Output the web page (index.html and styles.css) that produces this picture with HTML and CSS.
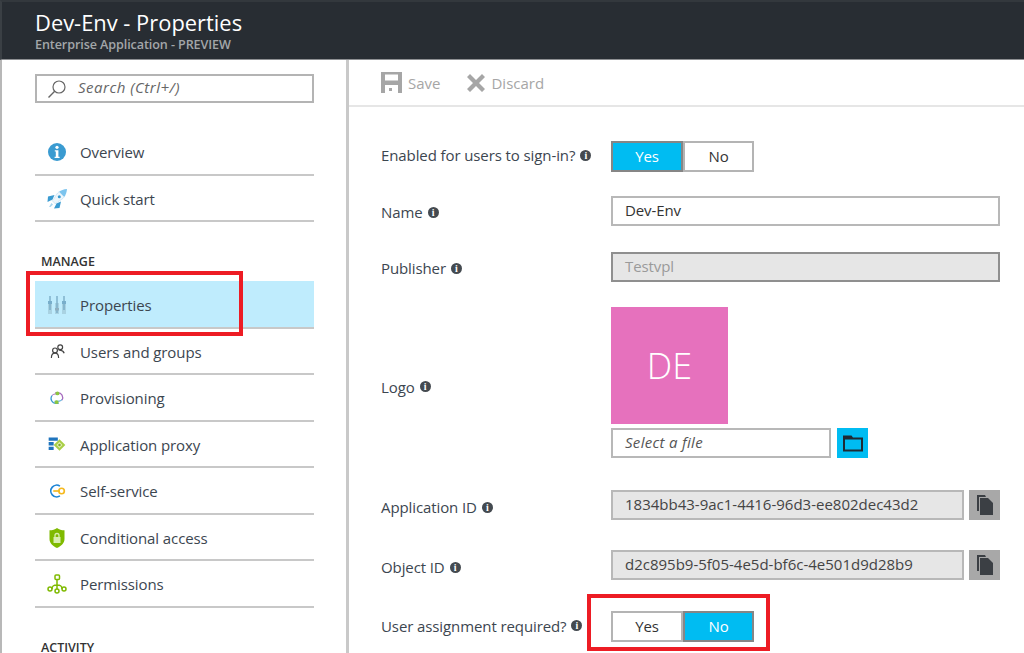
FILE: index.html
```html
<!DOCTYPE html>
<html lang="en">
<head>
<meta charset="utf-8">
<title>Dev-Env - Properties</title>
<link rel="stylesheet" href="styles.css">
</head>
<body>
<header class="blade-header">
  <h1 class="blade-title">Dev-Env - Properties</h1>
  <p class="blade-subtitle">Enterprise Application - PREVIEW</p>
</header>
<div class="blade-body">
  <aside class="sidebar">
    <div class="search">
      <svg class="search-icon" viewBox="0 0 20 20" width="20" height="20"><circle cx="12" cy="8" r="6" fill="none" stroke="#666" stroke-width="1.2"/><path d="M7.7 12.3 1.5 18.5" stroke="#666" stroke-width="1.4" fill="none"/></svg>
      <span class="search-text">Search (Ctrl+/)</span>
    </div>
    <nav class="nav nav-first">
      <a class="nav-item"><span class="nav-icon"><svg viewBox="0 0 20 20" width="20" height="20"><circle cx="10" cy="10" r="9" fill="#3a9bd1"/><circle cx="10" cy="5.3" r="1.6" fill="#fff"/><path d="M7.800 8.200h3.600v6.600h1.200v1.300H7.600v-1.300h1.200V9.500h-1z" fill="#fff"/></svg></span>Overview</a>
      <a class="nav-item"><span class="nav-icon"><svg viewBox="0 0 20 20" width="20" height="20"><path d="M20 0c-3.500.3-6 1.300-8 2.800l5.200 5.200C18.700 6 19.700 3.500 20 0z" fill="#7cc4ee"/><path d="M12 2.800C10 4.300 8.700 6.500 7.500 9L5 11.500 8.500 15l2.500-2.500c2.500-1.200 4.700-2.500 6.200-4.500z" fill="#eef6fb" stroke="#a9d5ee" stroke-width=".5"/><path d="M7.500 6 1 7.500.5 13l5-2.500zM14 12.500 12.500 19l-5.500.5 2.500-5z" fill="#3a9bd1"/><circle cx="12.300" cy="7.700" r="1.500" fill="#3a9bd1"/><path d="M4.500 14l1.500 1.500L3.500 18H2z" fill="#a9d5ee"/></svg></span>Quick start</a>
    </nav>
    <h2 class="nav-heading">MANAGE</h2>
    <nav class="nav">
      <a class="nav-item nav-item-active"><span class="nav-icon"><svg viewBox="0 0 20 20" width="20" height="20"><path d="M1 6h4v13H1zM8 8h4v11H8zM15 6h4v13h-4z" fill="#a9d2e2"/><path d="M3 1v14M10 1v17M17 1v14" stroke="#75a8c4" stroke-width="1.300" fill="none"/><path d="M1 6h4v3H1zM15 6h4v3h-4z" fill="#78aecb"/><path d="M8 13h4v2.500H8z" fill="#8fafc0"/></svg></span>Properties</a>
      <a class="nav-item"><span class="nav-icon"><svg viewBox="-3 -2 25 25" width="20" height="20"><g fill="none" stroke="#444" stroke-width="1.500"><circle cx="13.500" cy="4.500" r="3"/><circle cx="7" cy="8.500" r="3"/><path d="M2.500 18c0-4 1.500-6 4.500-6s4.500 2 4.500 6M11.500 8c2.500.5 5.500 0 7 4"/></g></svg></span>Users and groups</a>
      <a class="nav-item"><span class="nav-icon"><svg viewBox="-2 -2 24 24" width="20" height="20"><path d="M8 3.500h3a6 6 0 0 1 5 9" fill="none" stroke="#a569bd" stroke-width="1.500"/><path d="M12 16.500H9a6 6 0 0 1-5-9.500" fill="none" stroke="#3a9bd1" stroke-width="1.500"/><path d="M4 7c2-2 4-2 9-2" fill="none" stroke="#a569bd" stroke-width="1.200"/><path d="M16 12c-2 2-4 2-9 2" fill="none" stroke="#3a9bd1" stroke-width="1.200"/><circle cx="10.500" cy="4.500" r="2.300" fill="#8dc63f"/><circle cx="9.500" cy="15" r="2.300" fill="#8dc63f"/></svg></span>Provisioning</a>
      <a class="nav-item"><span class="nav-icon"><svg viewBox="-2 -2 24 24" width="20" height="20"><path d="M0 1h11v4H0zM0 6.500h6v4H0zM0 12h6v4H0z" fill="#1f74bd"/><path d="M13 3l7 7-7 7-7-7z" fill="#a9cf46"/><path d="M13 6.500l3.500 3.500-3.500 3.500L9.500 10z" fill="#e3f0b5"/><circle cx="13" cy="10" r="1.500" fill="#7fa82e"/></svg></span>Application proxy</a>
      <a class="nav-item"><span class="nav-icon"><svg viewBox="-2 -2 24 24" width="20" height="20"><path d="M13.500 4.200A7 7 0 1 0 13.500 15.800" fill="none" stroke="#1f86d6" stroke-width="2"/><path d="M5.500 10h8" stroke="#f5b91f" stroke-width="2" fill="none"/><circle cx="15.500" cy="10" r="3.300" fill="none" stroke="#f5b91f" stroke-width="2"/></svg></span>Self-service</a>
      <a class="nav-item"><span class="nav-icon"><svg viewBox="0 0 20 20" width="20" height="20"><path d="M10 0c2 1.500 4.500 2.300 7.500 2.300V11c0 4-3 7-7.500 9-4.500-2-7.500-5-7.500-9V2.300C5.500 2.300 8 1.500 10 0z" fill="#7fba00"/><path d="M6.500 9h7v6h-7z" fill="#d9eeb0"/><path d="M8 9V7.500a2 2 0 0 1 4 0V9" fill="none" stroke="#d9eeb0" stroke-width="1.300"/></svg></span>Conditional access</a>
      <a class="nav-item"><span class="nav-icon"><svg viewBox="0 0 20 20" width="20" height="20"><g fill="none" stroke="#7fba00" stroke-width="1.500"><rect x="8" y="1" width="4.500" height="4.500" rx="1"/><circle cx="3" cy="15" r="2"/><circle cx="10" cy="17" r="2"/><circle cx="17" cy="15" r="2"/><path d="M10 5.500V15M5 15c0-3 1-4 5-4s5 1 5 4"/></g></svg></span>Permissions</a>
    </nav>
    <h2 class="nav-heading nav-heading-activity">ACTIVITY</h2>
    <div class="callout callout-nav"></div>
  </aside>
  <main class="content">
    <div class="toolbar">
      <button class="tool" type="button"><svg viewBox="0 0 21 21" width="21" height="21"><path d="M0 0h21v21H0zM4 2.500v6h13v-6zM4 13v8h13v-8z" fill="#a6a6a6" fill-rule="evenodd"/><path d="M8 16h3v3H8z" fill="#a6a6a6"/></svg>Save</button>
      <button class="tool" type="button"><svg viewBox="0 0 18 18" width="18" height="18"><path d="M3 0l6 6 6-6 3 3-6 6 6 6-3 3-6-6-6 6-3-3 6-6-6-6z" fill="#a6a6a6"/></svg>Discard</button>
    </div>
    <form class="form">
      <div class="row row-enabled">
        <label class="label">Enabled for users to sign-in?<i class="info">i</i></label>
        <div class="toggle"><span class="toggle-opt toggle-on">Yes</span><span class="toggle-opt">No</span></div>
      </div>
      <div class="row row-text">
        <label class="label">Name<i class="info">i</i></label>
        <div class="field">Dev-Env</div>
      </div>
      <div class="row row-text">
        <label class="label">Publisher<i class="info">i</i></label>
        <div class="field field-disabled field-muted">Testvpl</div>
      </div>
      <div class="row row-logo">
        <label class="label">Logo<i class="info">i</i></label>
        <div class="logo-block">
          <div class="logo">DE</div>
          <div class="with-button">
            <div class="field field-file">Select a file</div>
            <span class="icon-btn icon-btn-blue"><svg viewBox="0 0 20 17" width="20" height="17"><path d="M1 15.500V3.500h18v12zM1 3.500V1.500h7l1.500 2" fill="none" stroke="#1f2a33" stroke-width="2"/></svg></span>
          </div>
        </div>
      </div>
      <div class="row row-id">
        <label class="label">Application ID<i class="info">i</i></label>
        <div class="with-button with-button-id">
          <div class="field field-disabled field-id">1834bb43-9ac1-4416-96d3-ee802dec43d2</div>
          <span class="icon-btn icon-btn-gray"><svg viewBox="0 0 16 20" width="16" height="20"><path d="M0 0h8l1 2H2v14H0z" fill="#3b3f44"/><path d="M3 3h8l5 5v12H3z" fill="#3b3f44"/></svg></span>
        </div>
      </div>
      <div class="row row-object">
        <label class="label">Object ID<i class="info">i</i></label>
        <div class="with-button with-button-id">
          <div class="field field-disabled field-id">d2c895b9-5f05-4e5d-bf6c-4e501d9d28b9</div>
          <span class="icon-btn icon-btn-gray"><svg viewBox="0 0 16 20" width="16" height="20"><path d="M0 0h8l1 2H2v14H0z" fill="#3b3f44"/><path d="M3 3h8l5 5v12H3z" fill="#3b3f44"/></svg></span>
        </div>
      </div>
      <div class="row row-assign">
        <label class="label">User assignment required?<i class="info">i</i></label>
        <div class="toggle"><span class="toggle-opt">Yes</span><span class="toggle-opt toggle-on">No</span></div>
      </div>
    </form>
    <div class="callout callout-form"></div>
  </main>
</div>
</body>
</html>
```
FILE: styles.css
```css
* { box-sizing: border-box; }
html, body { margin: 0; height: 653px; overflow: hidden; }
body {
  background: #fff;
  color: #3c4650;
  font-family: "Open Sans", "Noto Sans", sans-serif;
  font-size: 15px;
  letter-spacing: -0.1px;
}
.blade-header {
  height: 60px;
  padding: 9px 0 0 33px;
  background: #282d33;
  border-top: 2px solid #33383d;
  border-left: 2px solid #3a3f44;
  border-bottom: 1px solid #8e9093;
}
.blade-title {
  margin: 0;
  font-size: 21.9px;
  font-weight: 400;
  line-height: 24px;
  color: #fff;
  letter-spacing: 0;
}
.blade-subtitle {
  margin: 2px 0 0;
  font-size: 12.6px;
  font-weight: 600;
  line-height: 15px;
  color: #a3a6a9;
  letter-spacing: -0.1px;
}
.blade-body {
  display: flex;
  height: 593px;
  border-left: 2px solid #b8b8b8;
}
.sidebar {
  position: relative;
  flex: 0 0 347px;
  padding: 14px 32px 0 33px;
  border-right: 3px solid #c9c9c9;
}
.search {
  display: flex;
  align-items: center;
  height: 29px;
  padding-left: 10px;
  border: 2px solid #b4b4b4;
}
.search-icon { flex: none; }
.search-text {
  margin: -3px 0 0 11px;
  font-style: italic;
  color: #666;
  letter-spacing: 0.5px;
}
.nav-first { margin-top: 26px; }
.nav-item {
  display: flex;
  align-items: center;
  height: 46.5px;
  padding: 2px 0 0 12px;
  border-bottom: 2px solid #c8c8c8;
  color: #3c4650;
}
.nav-icon {
  display: flex;
  flex: 0 0 33px;
  align-items: center;
}
.nav-item-active {
  height: 47.5px;
  background: #bfecfd;
}
.nav-heading {
  margin: 31px 0 10px;
  padding-left: 6px;
  font-size: 12.5px;
  font-weight: 600;
  line-height: 18px;
  color: #333;
  letter-spacing: 0;
}
.nav-heading-activity { margin-top: 31px; }
.content {
  position: relative;
  flex: 1;
  min-width: 0;
}
.toolbar {
  display: flex;
  gap: 27px;
  align-items: center;
  height: 47px;
  padding-left: 32px;
  border-bottom: 2px solid #e6e6e6;
}
.tool {
  display: flex;
  gap: 6px;
  align-items: center;
  padding: 0;
  border: 0;
  background: none;
  color: #a6a6a6;
  font: inherit;
}
.form {
  display: flex;
  flex-direction: column;
  gap: 26px;
  padding: 34px 24px 0 32px;
}
.row {
  display: grid;
  grid-template-columns: 230px 1fr;
  align-items: center;
}
.row-logo { margin-top: -1px; }
.row-id { margin-top: 6px; }
.row-object { margin-top: 4px; }
.row-assign { margin-top: 5px; }
.label {
  display: flex;
  align-items: center;
}
.row-enabled .label { padding-bottom: 1px; }
.row-text .label { padding-top: 2px; }
.row-logo .label { padding-top: 8px; }
.row-id .label { padding-top: 4px; }
.row-object .label { padding-top: 4px; }
.info {
  display: inline-block;
  width: 11px;
  height: 11px;
  margin-left: 5px;
  border-radius: 50%;
  background: #444a50;
  color: #fff;
  font-family: "Liberation Serif", serif;
  font-size: 10px;
  font-style: normal;
  font-weight: 700;
  line-height: 11px;
  text-align: center;
  letter-spacing: 0;
}
.toggle {
  display: grid;
  grid-template-columns: 72px 71px;
  width: 143px;
  height: 29px;
}
.toggle-opt {
  border: 2px solid #b4b4b4;
  line-height: 27px;
  text-align: center;
  color: #333;
}
.toggle-on {
  border-color: #868686;
  background: #00bcf2;
  color: #fff;
}
.field {
  height: 30px;
  padding-left: 12px;
  border: 2px solid #b8b8b8;
  line-height: 25px;
  color: #333;
}
.field-disabled {
  background: #e6e6e6;
}
.field-muted {
  border-color: #8f8f8f;
  color: #9a9a9a;
}
.field-id {
  flex: 1;
  color: #444;
  letter-spacing: 0;
}
.field-file {
  flex: 0 0 220px;
  font-style: italic;
  color: #555;
  letter-spacing: 0.3px;
}
.logo {
  display: flex;
  align-items: center;
  justify-content: center;
  width: 117px;
  height: 117px;
  margin-bottom: 4px;
  background: #e671bd;
  color: #fff;
  font-size: 36px;
  font-weight: 300;
  letter-spacing: 0;
}
.with-button {
  display: flex;
  gap: 6px;
}
.with-button-id { gap: 5px; }
.icon-btn {
  display: flex;
  flex: 0 0 31px;
  align-items: center;
  justify-content: center;
  height: 30px;
}
.icon-btn-blue { background: #00bcf2; }
.icon-btn-gray { background: #a8a8a8; }
.callout {
  position: absolute;
  border: 4px solid #ed1c24;
  pointer-events: none;
}
.callout-nav {
  top: 211px;
  left: 24px;
  width: 217px;
  height: 65px;
}
.callout-form {
  top: 534px;
  left: 238px;
  width: 183px;
  height: 57px;
}
```
